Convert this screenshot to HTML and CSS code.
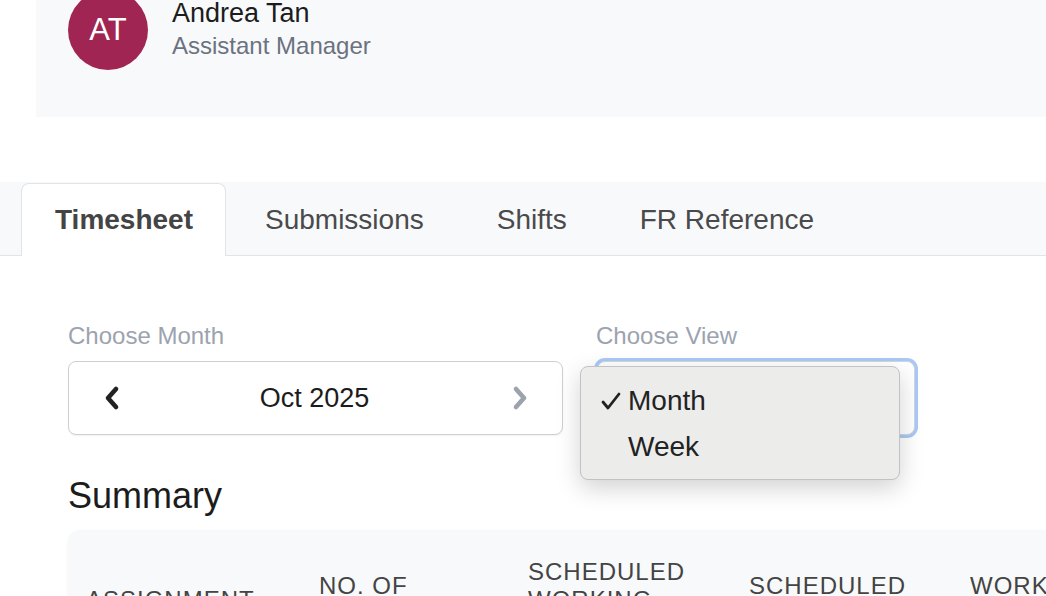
FILE: index.html
```html
<!DOCTYPE html>
<html lang="en">
<head>
<meta charset="utf-8">
<title>Timesheet</title>
<link rel="stylesheet" href="styles.css">
</head>
<body>
<div class="page">
  <section class="profile">
    <div class="avatar">AT</div>
    <div class="who">
      <div class="name">Andrea Tan</div>
      <div class="role">Assistant Manager</div>
    </div>
  </section>

  <nav class="tabs">
    <div class="tab active">Timesheet</div>
    <div class="tab">Submissions</div>
    <div class="tab">Shifts</div>
    <div class="tab">FR Reference</div>
  </nav>

  <main class="content">
    <div class="controls">
      <div class="field month-field">
        <div class="label">Choose Month</div>
        <div class="month-box">
          <svg class="chev" width="20" height="28" viewBox="0 0 20 28"><polyline points="14,5 6,14 14,23" fill="none" stroke="#222" stroke-width="4.6" stroke-linecap="round" stroke-linejoin="round"/></svg>
          <span class="month-text">Oct 2025</span>
          <svg class="chev" width="20" height="28" viewBox="0 0 20 28"><polyline points="6,5 14,14 6,23" fill="none" stroke="#9ca3af" stroke-width="4.6" stroke-linecap="round" stroke-linejoin="round"/></svg>
        </div>
      </div>
      <div class="field view-field">
        <div class="label">Choose View</div>
        <div class="view-box"></div>
        <div class="menu">
          <div class="opt"><svg class="check" width="20" height="20" viewBox="0 0 20 20"><polyline points="2,11 7,17 18,3" fill="none" stroke="#222" stroke-width="2.8" stroke-linecap="round" stroke-linejoin="round"/></svg><span>Month</span></div>
          <div class="opt"><span class="nocheck"></span><span>Week</span></div>
        </div>
      </div>
    </div>

    <h2 class="summary">Summary</h2>

    <div class="card">
      <div class="thead">
        <div class="th">ASSIGNMENT</div>
        <div class="th">NO. OF<br>DAYS</div>
        <div class="th">SCHEDULED<br>WORKING<br>HOURS</div>
        <div class="th">SCHEDULED<br>HOURS</div>
        <div class="th">WORKED<br>HOURS</div>
      </div>
    </div>
  </main>
</div>
</body>
</html>
```

FILE: styles.css
```css
html, body {
  margin: 0;
  padding: 0;
  background: #ffffff;
  overflow: hidden;
}
body {
  font-family: "Liberation Sans", Arial, Helvetica, sans-serif;
  color: #1f1f1f;
  width: 1046px;
  height: 596px;
}
.page {
  width: 1046px;
}
.profile {
  margin: -42px 0 0 36px;
  padding: 32px 32px 47px 32px;
  background: #f8f9fb;
  display: flex;
  align-items: center;
  gap: 24px;
}
.avatar {
  width: 80px;
  height: 80px;
  border-radius: 50%;
  background: #a02552;
  color: #ffffff;
  font-size: 31px;
  display: flex;
  align-items: center;
  justify-content: center;
  flex-shrink: 0;
}
.who {
  display: flex;
  flex-direction: column;
  gap: 2px;
  margin-top: -3px;
}
.name {
  font-size: 27px;
  line-height: 32px;
  color: #1c1c1c;
}
.role {
  font-size: 24px;
  line-height: 30px;
  color: #6b7280;
}
.tabs {
  margin-top: 65px;
  background: #f8f9fb;
  border-bottom: 1px solid #e2e4e8;
  padding: 1px 0 0 21px;
  display: flex;
  gap: 7px;
  height: 72px;
}
.tab {
  height: 72px;
  padding: 0 32px;
  border: 1px solid transparent;
  border-bottom: none;
  display: flex;
  align-items: center;
  font-size: 28px;
  color: #4a4a4a;
  box-sizing: border-box;
}
.tab.active {
  background: #ffffff;
  border-color: #e2e4e8;
  border-radius: 8px 8px 0 0;
  height: 73px;
  padding: 0 32px 0 33px;
  font-weight: bold;
  color: #444444;
  margin-right: -1px;
}
.content {
  padding: 66px 0 0 68px;
}
.controls {
  display: flex;
  gap: 33px;
}
.field {
  display: flex;
  flex-direction: column;
  gap: 11px;
}
.view-field {
  position: relative;
}
.label {
  font-size: 24px;
  line-height: 28px;
  color: #9ca3af;
}
.month-box {
  width: 495px;
  height: 74px;
  box-sizing: border-box;
  border: 1px solid #ccd0d5;
  border-radius: 8px;
  background: #ffffff;
  box-shadow: 0 1px 2px rgba(0, 0, 0, 0.06);
  display: flex;
  align-items: center;
  justify-content: space-between;
  padding: 0 32px 0 33px;
}
.month-text {
  font-size: 27px;
  color: #1c1c1c;
  margin-left: -3px;
}
.chev {
  display: block;
}
.view-box {
  width: 318px;
  height: 74px;
  box-sizing: border-box;
  border: 1px solid #d3d6db;
  border-radius: 8px;
  background: #ffffff;
  box-shadow: 0 0 0 3px #a8c9f6;
  margin-left: 1px;
}
.menu {
  position: absolute;
  left: -16px;
  top: 44px;
  width: 320px;
  box-sizing: border-box;
  background: #ececeb;
  border: 1px solid #c2c2c2;
  border-radius: 8px;
  box-shadow: 0 8px 24px rgba(0, 0, 0, 0.18);
  padding: 11px 0 9px 0;
}
.opt {
  height: 46px;
  display: flex;
  align-items: center;
  gap: 7px;
  padding-left: 20px;
  font-size: 28px;
  color: #222222;
}
.check, .nocheck {
  width: 20px;
  height: 20px;
  display: block;
  flex-shrink: 0;
}
.summary {
  margin: 39px 0 0 0;
  font-size: 36px;
  line-height: 44px;
  font-weight: normal;
  color: #1c1c1c;
}
.card {
  margin-top: 12px;
  margin-right: -40px;
  background: #f8f9fb;
  border-radius: 12px;
  box-shadow: 0 1px 3px rgba(0, 0, 0, 0.06);
  padding: 28px 0 28px 18px;
}
.thead {
  display: grid;
  grid-template-columns: 233px 209px 221px 221px 221px;
  align-items: center;
}
.th {
  font-size: 24px;
  line-height: 28px;
  letter-spacing: 1px;
  color: #444444;
}
```
